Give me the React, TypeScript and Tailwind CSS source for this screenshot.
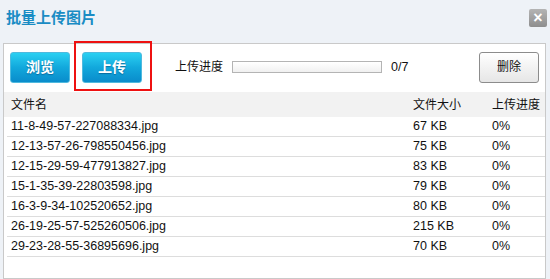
const files = [
  { name: "11-8-49-57-227088334.jpg", size: "67 KB" },
  { name: "12-13-57-26-798550456.jpg", size: "75 KB" },
  { name: "12-15-29-59-477913827.jpg", size: "83 KB" },
  { name: "15-1-35-39-22803598.jpg", size: "79 KB" },
  { name: "16-3-9-34-102520652.jpg", size: "80 KB" },
  { name: "26-19-25-57-525260506.jpg", size: "215 KB" },
  { name: "29-23-28-55-36895696.jpg", size: "70 KB" },
];

const BlueButton = ({ label }: { label: string }) => (
  <button className="h-[31px] w-[60px] rounded-[3px] border border-[#4fb9de] bg-gradient-to-b from-[#2ad0f2] via-[#12a8dc] to-[#0a8ccb] text-[14px] font-bold text-white [text-shadow:0_1px_1px_rgba(0,60,110,0.5)]">
    {label}
  </button>
);

const App = () => {
  return (
    <div className="flex h-[279px] w-[550px] flex-col overflow-hidden bg-[#eef2f7] font-['Liberation_Sans','Noto_Sans_CJK_SC',sans-serif] text-[12px] text-[#111]">
      <div className="flex h-[36px] items-center justify-between pl-[6px] pr-[3px]">
        <h1 className="text-[15px] font-bold text-[#1a8cc4]">批量上传图片</h1>
        <button className="flex h-[18px] w-[18px] items-center justify-center rounded-[2px] bg-gradient-to-b from-[#b4b4b4] to-[#8e8e8e] text-[16px] font-bold leading-none text-white">
          ×
        </button>
      </div>

      <div className="mt-[7px] ml-[3px] flex w-[543px] flex-1 flex-col border border-[#c9c9c9] bg-white">
        <div className="relative flex h-[48px] items-start pl-[6px] pr-[6px] pt-[7px]">
          <div className="flex h-[32px] w-full items-center">
            <BlueButton label="浏览" />
            <div className="ml-[12px]">
              <BlueButton label="上传" />
            </div>
            <span className="ml-[33px]">上传进度</span>
            <div className="ml-[9px] h-[12px] w-[150px] border border-[#b4b4b4] bg-gradient-to-b from-white to-[#f0f0f0]" />
            <span className="ml-[9px] text-[12.5px]">0/7</span>
            <button className="ml-auto h-[31px] w-[60px] rounded-[3px] border border-[#8c8c8c] bg-gradient-to-b from-white to-[#e6e6e6] text-[12px]">
              删除
            </button>
          </div>
          <div className="pointer-events-none absolute left-[70px] top-[-3px] h-[50px] w-[78px] border-2 border-[#ee1111]" />
        </div>

        <div className="grid h-[25px] grid-cols-[402px_79px_1fr] items-center bg-[#f2f2f2] pl-[7px]">
          <span>文件名</span>
          <span>文件大小</span>
          <span>上传进度</span>
        </div>

        {files.map((f) => (
          <div
            key={f.name}
            className="ml-[3px] grid h-[20px] grid-cols-[402px_79px_1fr] items-center border-b border-[#dddddd] pl-[4px] text-[12.5px]"
          >
            <span>{f.name}</span>
            <span>{f.size}</span>
            <span>0%</span>
          </div>
        ))}
      </div>
    </div>
  );
};

export default App;
